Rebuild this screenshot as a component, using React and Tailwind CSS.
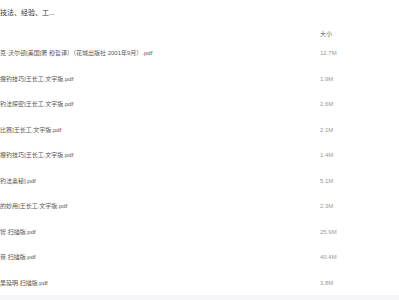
const files = [
  { name: "克·沃尔顿[美国]著 穆哲译）（花城出版社 2001年9月）.pdf", size: "12.7M" },
  { name: "擅钓技巧]王长工.文字版.pdf", size: "1.9M" },
  { name: "钓法探密]王长工.文字版.pdf", size: "2.6M" },
  { name: "比赛]王长工.文字版.pdf", size: "2.1M" },
  { name: "擅钓技巧]王长工.文字版.pdf", size: "1.4M" },
  { name: "钓法奥秘].pdf", size: "5.1M" },
  { name: "的妙用]王长工.文字版.pdf", size: "2.3M" },
  { name: "智.扫描版.pdf", size: "25.9M" },
  { name: "音.扫描版.pdf", size: "40.4M" },
  { name: "吴延明.扫描版.pdf", size: "3.8M" },
];

export default function App() {
  return (
    <div className="h-[300px] w-full overflow-hidden bg-white font-['Liberation_Sans','Noto_Sans_CJK_SC',sans-serif]">
      <div className="flex h-[24px] items-center">
        <span className="whitespace-nowrap text-[7px] leading-[9px] text-[#333]">技法、经验、工...</span>
      </div>
      <div className="flex h-[16px] items-end pb-[2px]">
        <div className="w-[320px] shrink-0" />
        <span className="text-[6px] leading-[8px] text-[#555]">大小</span>
      </div>
      <div className="pt-[0.25px]">
        {files.map((f, i) => (
          <div key={i} className="flex h-[25.5px] items-center">
            <div className="w-[320px] shrink-0">
              <span className="block whitespace-nowrap text-[6px] leading-[8px] text-[#555]">{f.name}</span>
            </div>
            <span className="text-[6px] leading-[8px] text-[#999]">{f.size}</span>
          </div>
        ))}
      </div>
      <div className="h-[10px] bg-[#f5f5f7]" />
    </div>
  );
}
